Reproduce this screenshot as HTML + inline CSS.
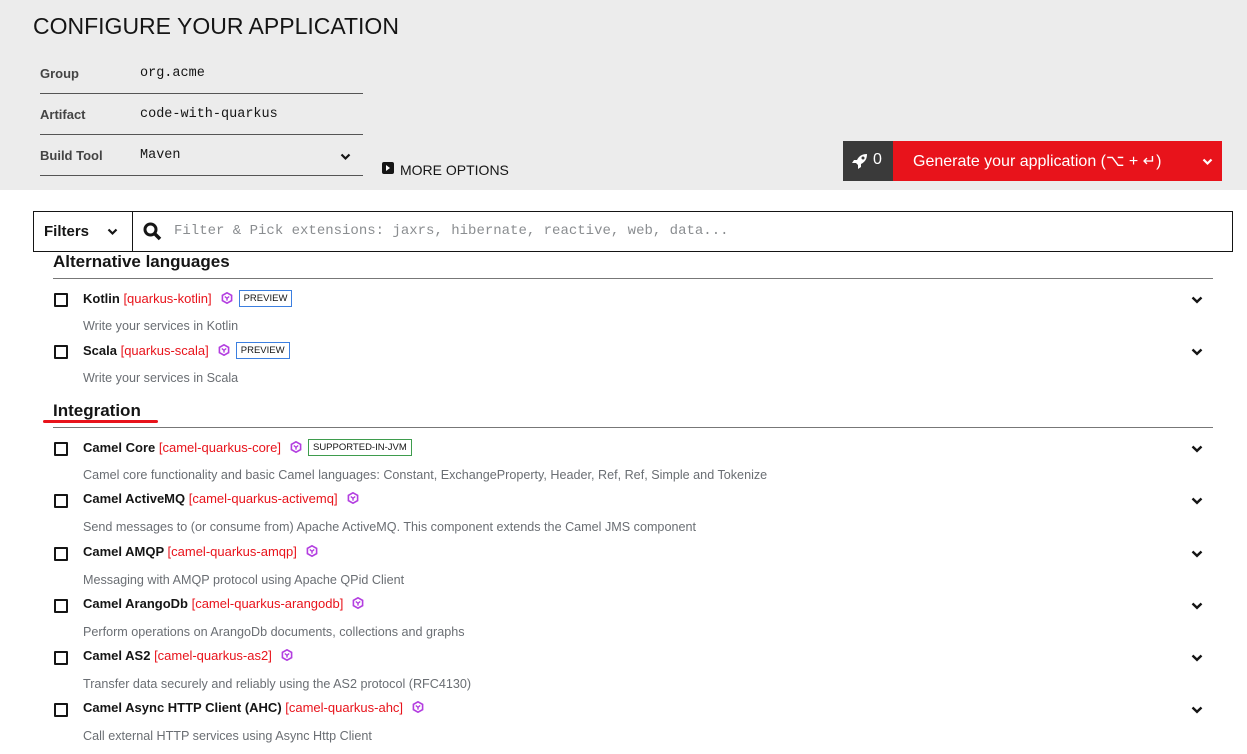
<!DOCTYPE html>
<html><head><meta charset="utf-8"><style>
*{margin:0;padding:0;box-sizing:border-box}
body{width:1247px;height:754px;overflow:hidden;background:#fff;font-family:"Liberation Sans",sans-serif;color:#151515;position:relative}
.a{position:absolute;white-space:nowrap}
.hdr{position:absolute;left:0;top:0;width:1247px;height:190px;background:#ececec}
.lbl{font-size:13px;font-weight:bold;color:#444}
.val{font-family:"Liberation Mono",monospace;font-size:13.5px;color:#151515}
.ln{position:absolute;left:40px;width:323px;height:1px;background:#555}
.cb{position:absolute;left:54px;width:14px;height:14px;border:2px solid #151515;border-radius:1px}
.t{font-size:13px;font-weight:bold}
.id{color:#e8131b;font-weight:normal}
.d{font-size:12.6px;color:#6a6e73}
.tag{display:inline-block;font-size:9.5px;font-weight:normal;border:1px solid #3c7fe0;padding:2px 4px;vertical-align:2px;margin-left:6px;color:#151515}
.hex{display:inline-block;width:12px;height:12px;margin-left:9px;vertical-align:-1px}
.chev{position:absolute;left:1191px;width:12px;height:8px}
.sec{font-size:17px;font-weight:bold}
</style></head><body>
<div class="hdr"></div>
<div class="a" style="left:33px;top:13px;font-size:23px;color:#151515">CONFIGURE YOUR APPLICATION</div>
<div class="a lbl" style="left:40px;top:66px">Group</div><div class="a val" style="left:140px;top:66px">org.acme</div><div class="ln" style="top:93px"></div>
<div class="a lbl" style="left:40px;top:107px">Artifact</div><div class="a val" style="left:140px;top:107px">code-with-quarkus</div><div class="ln" style="top:134px"></div>
<div class="a lbl" style="left:40px;top:148px">Build Tool</div><div class="a val" style="left:140px;top:148px">Maven</div><div class="ln" style="top:175px"></div>
<svg class="a" style="left:340px;top:153px" width="11" height="8" viewBox="0 0 11 8"><path d="M1.5 1.5L5.5 5.5L9.5 1.5" stroke="#151515" stroke-width="2.2" fill="none"/></svg>
<div class="a" style="left:382px;top:162px;width:12px;height:12px;background:#151515;border-radius:2px"></div>
<svg class="a" style="left:385px;top:165px" width="6" height="6"><path d="M1 0L5 3L1 6Z" fill="#fff"/></svg>
<div class="a" style="left:400px;top:162px;font-size:14px">MORE OPTIONS</div>
<div class="a" style="left:843px;top:141px;width:50px;height:40px;background:#3a3a3a"></div>
<svg class="a" style="left:851px;top:152px" width="18" height="18" viewBox="0 0 18 18"><path d="M16 2C11 2 8 4 6 8L3 8L1 11L5 11L7 13L7 17L10 15L10 12C14 10 16 7 16 2Z" fill="#fff"/><circle cx="12" cy="6" r="1.5" fill="#3a3a3a"/></svg>
<div class="a" style="left:873px;top:151px;color:#fff;font-size:16px">0</div>
<div class="a" style="left:893px;top:141px;width:329px;height:40px;background:#e8131b"></div>
<div class="a" style="left:913px;top:151px;color:#fff;font-size:16px">Generate your application (⌥ + ↵)</div>
<svg class="a" style="left:1202px;top:158px" width="11" height="8" viewBox="0 0 11 8"><path d="M1.5 1.5L5.5 5.5L9.5 1.5" stroke="#fff" stroke-width="2.2" fill="none"/></svg>
<div class="a" style="left:33px;top:211px;width:1200px;height:41px;border:1.5px solid #151515"></div>
<div class="a" style="left:132px;top:211px;width:1px;height:41px;background:#151515"></div>
<div class="a" style="left:44px;top:223px;font-size:15px;font-weight:bold">Filters</div>
<svg class="a" style="left:107px;top:228px" width="11" height="8" viewBox="0 0 11 8"><path d="M1.5 1.5L5.5 5.5L9.5 1.5" stroke="#151515" stroke-width="2.2" fill="none"/></svg>
<svg class="a" style="left:143px;top:222px" width="19" height="19" viewBox="0 0 19 19"><circle cx="7.5" cy="7.5" r="5.5" stroke="#151515" stroke-width="3" fill="none"/><path d="M11.5 11.5L17 17" stroke="#151515" stroke-width="3.5"/></svg>
<div class="a" style="left:174px;top:223px;font-family:'Liberation Mono',monospace;font-size:14px;color:#8a8d90">Filter &amp; Pick extensions: jaxrs, hibernate, reactive, web, data...</div>

<div class="a sec" style="left:53px;top:252px">Alternative languages</div>
<div class="a" style="left:53px;top:278px;width:1160px;height:1px;background:#777"></div>
<div class="a sec" style="left:53px;top:401px">Integration</div>
<div class="a" style="left:53px;top:427px;width:1160px;height:1px;background:#777"></div>
<div class="a" style="left:43px;top:420px;width:115px;height:3px;background:#e8131b;border-radius:2px"></div>

<svg width="0" height="0" style="position:absolute"><defs><symbol id="hx" viewBox="0 0 12 12"><path d="M6 0.8L10.6 3.4V8.6L6 11.2L1.4 8.6V3.4Z" fill="none" stroke="#b33ee0" stroke-width="1.6"/><path d="M3.8 4.5L6 6.3L8.2 4.5M6 6.3V8.6" fill="none" stroke="#b33ee0" stroke-width="1.4"/></symbol><symbol id="cv" viewBox="0 0 12 8"><path d="M1.5 1.5L6 5.8L10.5 1.5" stroke="#151515" stroke-width="2.4" fill="none"/></symbol></defs></svg>

<div class="cb" style="top:293px"></div><div class="a t" style="left:83px;top:290px">Kotlin <span class="id">[quarkus-kotlin]</span><svg class="hex"><use href="#hx"/></svg><span class="tag">PREVIEW</span></div><div class="a d" style="left:83px;top:319px">Write your services in Kotlin</div><svg class="chev" style="top:296px"><use href="#cv"/></svg>
<div class="cb" style="top:345px"></div><div class="a t" style="left:83px;top:342px">Scala <span class="id">[quarkus-scala]</span><svg class="hex"><use href="#hx"/></svg><span class="tag">PREVIEW</span></div><div class="a d" style="left:83px;top:371px">Write your services in Scala</div><svg class="chev" style="top:348px"><use href="#cv"/></svg>

<div class="cb" style="top:442px"></div><div class="a t" style="left:83px;top:439px">Camel Core <span class="id">[camel-quarkus-core]</span><svg class="hex"><use href="#hx"/></svg><span class="tag" style="border-color:#3e9c4d">SUPPORTED-IN-JVM</span></div><div class="a d" style="left:83px;top:468px">Camel core functionality and basic Camel languages: Constant, ExchangeProperty, Header, Ref, Ref, Simple and Tokenize</div><svg class="chev" style="top:445px"><use href="#cv"/></svg>
<div class="cb" style="top:494px"></div><div class="a t" style="left:83px;top:491px">Camel ActiveMQ <span class="id">[camel-quarkus-activemq]</span><svg class="hex"><use href="#hx"/></svg></div><div class="a d" style="left:83px;top:520px">Send messages to (or consume from) Apache ActiveMQ. This component extends the Camel JMS component</div><svg class="chev" style="top:497px"><use href="#cv"/></svg>
<div class="cb" style="top:547px"></div><div class="a t" style="left:83px;top:544px">Camel AMQP <span class="id">[camel-quarkus-amqp]</span><svg class="hex"><use href="#hx"/></svg></div><div class="a d" style="left:83px;top:573px">Messaging with AMQP protocol using Apache QPid Client</div><svg class="chev" style="top:550px"><use href="#cv"/></svg>
<div class="cb" style="top:599px"></div><div class="a t" style="left:83px;top:596px">Camel ArangoDb <span class="id">[camel-quarkus-arangodb]</span><svg class="hex"><use href="#hx"/></svg></div><div class="a d" style="left:83px;top:625px">Perform operations on ArangoDb documents, collections and graphs</div><svg class="chev" style="top:602px"><use href="#cv"/></svg>
<div class="cb" style="top:651px"></div><div class="a t" style="left:83px;top:648px">Camel AS2 <span class="id">[camel-quarkus-as2]</span><svg class="hex"><use href="#hx"/></svg></div><div class="a d" style="left:83px;top:677px">Transfer data securely and reliably using the AS2 protocol (RFC4130)</div><svg class="chev" style="top:654px"><use href="#cv"/></svg>
<div class="cb" style="top:703px"></div><div class="a t" style="left:83px;top:700px">Camel Async HTTP Client (AHC) <span class="id">[camel-quarkus-ahc]</span><svg class="hex"><use href="#hx"/></svg></div><div class="a d" style="left:83px;top:729px">Call external HTTP services using Async Http Client</div><svg class="chev" style="top:706px"><use href="#cv"/></svg>
</body></html>
